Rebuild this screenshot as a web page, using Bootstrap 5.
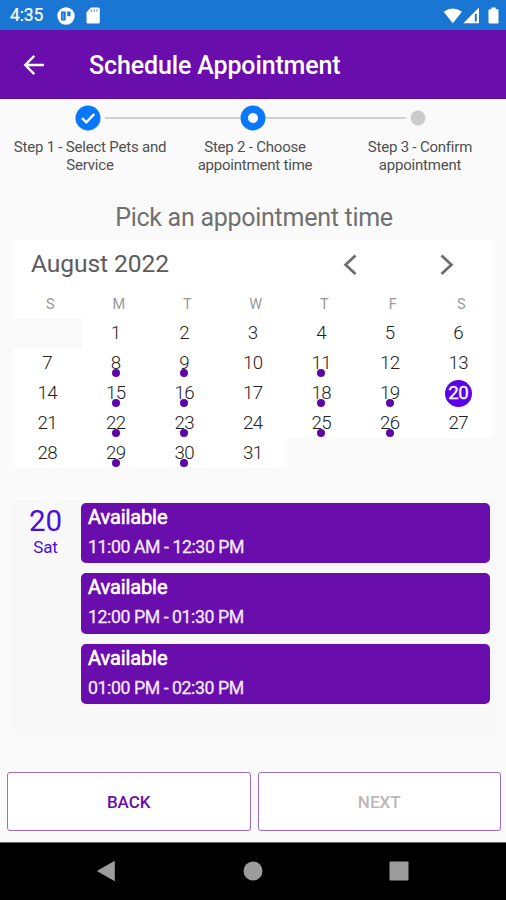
<!DOCTYPE html>
<html lang="en">
<head>
<meta charset="utf-8">
<meta name="viewport" content="width=device-width, initial-scale=1">
<title>Schedule Appointment</title>
<link href="https://cdn.jsdelivr.net/npm/bootstrap@5.3.0/dist/css/bootstrap.min.css" rel="stylesheet">
<style>
  body { font-family: Roboto, "Noto Sans", sans-serif; background: #fafafa; color: #444; line-height: 1; }
  .screen { width: 506px; height: 900px; overflow: hidden; }
  svg { display: block; flex: none; }
  .status-bar { height: 30px; background: #1976d2; padding: 1px 7px 0 10px; }
  .clock { font-size: 17.5px; width: 47px; letter-spacing: -.1px; -webkit-text-stroke: .2px #fff; }
  .card-icon { margin-left: 11px; }
  .app-bar { height: 69px; background: #6a0dad; padding: 1px 22px 0; border-bottom: 1px solid #5c0a98; }
  .app-title { font-size: 25px; font-weight: 500; margin: 1px 0 0 43px; line-height: 1; letter-spacing: -.13px; }
  .stepper { padding: 6px 3px 0 5.5px; height: 93px; }
  .step-item { width: 165px; }
  .step-track { height: 26px; }
  .step-line { height: 2px; background: #d0d0d0; }
  .step-text { font-size: 15px; letter-spacing: -.21px; line-height: 17.5px; color: #505050; padding: 8px 0 0 4px; white-space: nowrap; }
  .pick-title { font-size: 25px; letter-spacing: -.27px; font-weight: 400; color: #707070; height: 48px; padding: 13px 0 0 2px; }
  .calendar { width: 482px; margin-left: 13px; height: 228px; }
  .cal-head { height: 51px; background: #fff; padding: 0 41px 3px 18px; }
  .cal-arrows { gap: 83px; }
  .month-name { font-size: 24.6px; letter-spacing: -.1px; color: #5c5c5c; }
  .week-head { height: 27px; background: #fff; width: 480px; padding: 1px 0 0 3px; font-size: 14.5px; color: #999; }
  .days { width: 480px; }
  .week-head, .days { display: grid; grid-template-columns: repeat(7, 68.5px); }
  .days { grid-auto-rows: 30px; }
  .day { background: #fff; font-size: 18.7px; font-weight: 300; letter-spacing: -.6px; color: #222; padding-top: 1px; }
  .day.blank { background: #f9f9f9; }
  .dot { width: 8px; height: 8px; background: #5e05a8; bottom: 1px; left: 50%; margin-left: -4px; }
  .picked { width: 27px; height: 27px; background: #5a00ea; color: #fff; font-weight: 400; -webkit-text-stroke: .35px #fff; }
  .agenda { width: 482px; height: 235px; margin: 32px 0 0 13px; background: #f8f8f8; padding: 3px 5px 0 0; }
  .agenda-date { width: 68px; padding: 1px 3px 0 0; color: #4a10e0; }
  .agenda-num { font-size: 29.5px; line-height: 35px; }
  .agenda-day { font-size: 17px; line-height: 20px; letter-spacing: -.2px; margin-top: -2px; }
  .slot { height: 60.3px; background: #6a0dad; border-radius: 5px; padding: 4px 7px 0; color: #fff; }
  .slot-title { font-size: 20px; line-height: 21px; letter-spacing: -.1px; -webkit-text-stroke: .6px #fff; }
  .slot-time { font-size: 17.7px; letter-spacing: -.42px; line-height: 20px; margin-top: 9px; color: #f3eafa; -webkit-text-stroke: .3px #f3eafa; }
  .slots { gap: 10px; }
  .actions { height: 107px; padding: 37px 5px 11px 7px; gap: 7px; }
  .btn-step { --bs-btn-padding-y: 2px; padding-bottom: 0; --bs-btn-font-size: 17px; --bs-btn-font-weight: 500; --bs-btn-border-radius: 3px; --bs-btn-border-color: #9a6bc9; --bs-btn-bg: #fff; --bs-btn-color: #6a0dad; --bs-btn-disabled-bg: #fff; --bs-btn-disabled-border-color: #9a6bc9; --bs-btn-disabled-color: #b9b9b9; --bs-btn-disabled-opacity: 1; }
  .system-nav { height: 58px; background: #000; border-top: 1px solid #666; padding: 0 97px 2px 96px; }
</style>
<script src="https://cdn.jsdelivr.net/npm/bootstrap@5.3.0/dist/js/bootstrap.bundle.min.js"></script>
</head>
<body>
<div class="screen d-flex flex-column">
  <div class="status-bar d-flex align-items-center text-white">
    <span class="clock">4:35</span>
    <svg width="18" height="18" viewBox="0 0 18 18"><circle cx="9" cy="9" r="8.700" fill="#fff"/><path d="M4 4.500h4.700v9H4z" fill="#1976d2"/><path d="M5.500 6h1v6h-1z" fill="#8bb9e8"/><path d="M10.300 4.500h3.200v4.700h-3.200z" fill="#1976d2"/></svg>
    <svg class="card-icon" width="14" height="17" viewBox="0 0 14 17"><path d="M5 .5h7.300A1.500 1.500 0 0 1 13.800 2v13a1.500 1.500 0 0 1-1.500 1.500H2A1.500 1.500 0 0 1 .5 15V5.200z" fill="#fff"/><path d="M5.500 2.300v2.500M8.200 2.300v2.500M10.900 2.300v2.500" stroke="#6aa5e2" stroke-width="1.300"/></svg>
    <div class="ms-auto d-flex align-items-center">
      <svg width="20" height="16" viewBox="0 0 20 16"><path d="M.6 3.700Q9.700-2.800 19 3.700L9.800 15.300z" fill="#fff"/></svg>
      <svg width="17" height="17" viewBox="0 0 17 17"><path d="M16 .5V16.300H.3z" fill="#fff"/><path d="M12.800 7V14.500" stroke="#1976d2" stroke-width="2"/></svg>
      <svg class="ms-2" width="11" height="17" viewBox="0 0 11 17"><path d="M3.300.4h4.400v1.800h1.800a1 1 0 0 1 1 1v12.300a1 1 0 0 1-1 1h-8a1 1 0 0 1-1-1V3.200a1 1 0 0 1 1-1h1.800z" fill="#fff"/></svg>
    </div>
  </div>

  <nav class="app-bar d-flex align-items-center text-white">
    <svg width="24" height="22" viewBox="0 0 24 22" fill="none" stroke="#fff" stroke-width="2.400"><path d="M22 11H3.500M12.300 1.900 3.300 11l9 9.100"/></svg>
    <h1 class="app-title">Schedule Appointment</h1>
  </nav>

  <div class="stepper d-flex">
    <div class="step-item">
      <div class="step-track d-flex align-items-center">
        <div class="flex-fill w-50 me-1"></div>
        <svg width="26" height="26" viewBox="0 0 26 26"><circle cx="13" cy="13" r="12.500" fill="#0877f9"/><path d="M7 13.200l4.300 4.200 8-8.400" fill="none" stroke="#fff" stroke-width="2.400"/></svg>
        <div class="flex-fill w-50 step-line ms-1"></div>
      </div>
      <div class="step-text text-center">Step 1 - Select Pets and<br>Service</div>
    </div>
    <div class="step-item">
      <div class="step-track d-flex align-items-center">
        <div class="flex-fill w-50 step-line"></div>
        <svg width="26" height="26" viewBox="0 0 26 26"><circle cx="13" cy="13" r="12.500" fill="#0877f9"/><circle cx="13" cy="13" r="5" fill="#fff"/></svg>
        <div class="flex-fill w-50 step-line"></div>
      </div>
      <div class="step-text text-center">Step 2 - Choose<br>appointment time</div>
    </div>
    <div class="step-item">
      <div class="step-track d-flex align-items-center">
        <div class="flex-fill w-50 step-line me-1"></div>
        <svg width="16" height="16" viewBox="0 0 16 16"><circle cx="8" cy="8" r="7.500" fill="#cbcbcb"/></svg>
        <div class="flex-fill w-50 ms-1"></div>
      </div>
      <div class="step-text text-center">Step 3 - Confirm<br>appointment</div>
    </div>
  </div>

  <div class="pick-title text-center">Pick an appointment time</div>

  <div class="calendar">
    <div class="cal-head d-flex align-items-center">
      <div class="month-name">August 2022</div>
      <div class="cal-arrows ms-auto d-flex">
        <svg width="14" height="22" viewBox="0 0 14 22" fill="none" stroke="#6e6e6e" stroke-width="2.800"><path d="M12.500 2.500 2.600 11.800l9.900 9.200"/></svg>
        <svg width="14" height="22" viewBox="0 0 14 22" fill="none" stroke="#6e6e6e" stroke-width="2.800"><path d="M1.500 2.500l9.900 9.300L1.500 21"/></svg>
      </div>
    </div>
    <div class="week-head text-center align-items-center">
      <span>S</span><span>M</span><span>T</span><span>W</span><span>T</span><span>F</span><span>S</span>
    </div>
    <div class="days" id="days"></div>
  </div>

  <div class="agenda d-flex">
    <div class="agenda-date text-center">
      <div class="agenda-num">20</div>
      <div class="agenda-day">Sat</div>
    </div>
    <div class="slots d-flex flex-column flex-fill">
      <div class="slot"><div class="slot-title">Available</div><div class="slot-time">11:00 AM - 12:30 PM</div></div>
      <div class="slot"><div class="slot-title">Available</div><div class="slot-time">12:00 PM - 01:30 PM</div></div>
      <div class="slot"><div class="slot-title">Available</div><div class="slot-time">01:00 PM - 02:30 PM</div></div>
    </div>
  </div>

  <div class="actions d-flex">
    <button type="button" class="btn btn-step flex-fill w-50">BACK</button>
    <button type="button" class="btn btn-step flex-fill w-50" disabled>NEXT</button>
  </div>

  <div class="system-nav d-flex justify-content-between align-items-center">
    <svg width="20" height="22" viewBox="0 0 20 22"><path d="M.8 11 18.800.8v20.400z" fill="#9c9c9c"/></svg>
    <svg width="20" height="20" viewBox="0 0 20 20"><circle cx="10" cy="10" r="9.500" fill="#9c9c9c"/></svg>
    <svg width="20" height="20" viewBox="0 0 20 20"><rect x=".5" y=".5" width="19" height="19" rx="1" fill="#9c9c9c"/></svg>
  </div>
</div>
<script>
  // August 2022 starts on a Monday; dotted days have open slots.
  const open = [8, 9, 11, 15, 16, 18, 19, 22, 23, 25, 26, 29, 30];
  let html = '<div class="day blank"></div>';
  for (let d = 1; d <= 31; d++) {
    const label = d === 20 ? '<span class="picked rounded-circle d-flex align-items-center justify-content-center">20</span>' : d;
    const dot = open.includes(d) ? '<span class="dot rounded-circle position-absolute"></span>' : '';
    html += '<div class="day position-relative d-flex align-items-center justify-content-center">' + label + dot + '</div>';
  }
  document.getElementById('days').innerHTML = html;
</script>
</body>
</html>
